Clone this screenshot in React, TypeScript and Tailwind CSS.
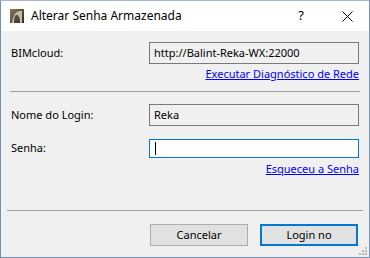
import React from "react";

const FONT = { fontFamily: '"Segoe UI", "Noto Sans", "Liberation Sans", sans-serif' };

const AppIcon = () => (
  <svg width="14" height="14" viewBox="0 0 14 14">
    <defs>
      <linearGradient id="ac" x1="0" y1="0" x2="1" y2="1">
        <stop offset="0" stopColor="#8a7a5c" />
        <stop offset="1" stopColor="#2e2a22" />
      </linearGradient>
    </defs>
    <rect width="14" height="14" fill="url(#ac)" />
    <path d="M2 14 C3 6 6 2 10 2 L12 2 L12 14 L10 14 C10 8 8 5 6 6 C4 7 4 10 4 14 Z" fill="#d8d0bc" opacity="0.85" />
  </svg>
);

const Row = ({ label, children }: { label: string; children: React.ReactNode }) => (
  <div className="flex items-center">
    <div className="w-[138px] text-[11px] text-black">{label}</div>
    <div className="flex-1">{children}</div>
  </div>
);

const App = () => {
  return (
    <div className="w-[370px] h-[258px] bg-[#f0f0f0] border border-[#7590b5] border-t-[#aab8cc] flex flex-col overflow-hidden" style={FONT}>
      {/* title bar */}
      <div className="h-[30px] bg-white flex items-center pl-[9px] shrink-0">
        <AppIcon />
        <span className="ml-[7px] text-[12px] text-black">Alterar Senha Armazenada</span>
        <span className="ml-auto w-[28px] text-center text-[13px] text-black">?</span>
        <svg className="ml-[27px] mr-[16px]" width="11" height="11" viewBox="0 0 11 11">
          <path d="M0.5 0.5 L10.5 10.5 M10.5 0.5 L0.5 10.5" stroke="#000" strokeWidth="1" />
        </svg>
      </div>

      {/* server */}
      <div className="px-[10px] pt-[11px]">
        <Row label="BIMcloud:">
          <div className="h-[22px] border border-[#7a7a7a] flex items-center pl-[4px] text-[11px] text-black">
            http://Balint-Reka-WX:22000
          </div>
        </Row>
        <div className="flex justify-end mt-[3px]">
          <a className="text-[11px] text-[#0000ff] underline leading-[14px]">Executar Diagnóstico de Rede</a>
        </div>
      </div>

      <div className="mx-[9px] mt-[10px] h-px bg-[#a0a0a0]" />

      {/* credentials */}
      <div className="px-[10px] pt-[12px]">
        <Row label="Nome do Login:">
          <div className="h-[22px] border border-[#7a7a7a] flex items-center pl-[4px] text-[11px] text-black">Reka</div>
        </Row>
        <div className="mt-[13px]">
          <Row label="Senha:">
            <div className="h-[19px] border border-[#0078d7] bg-white flex items-center pl-[5px]">
              <div className="w-px h-[13px] bg-black" />
            </div>
          </Row>
        </div>
        <div className="flex justify-end mt-[4px]">
          <a className="text-[11px] text-[#0000ff] underline leading-[14px]">Esqueceu a Senha</a>
        </div>
      </div>

      <div className="mx-[6px] mt-[34px] h-px bg-[#a0a0a0]" />

      {/* buttons */}
      <div className="flex justify-end gap-[12px] pr-[11px] mt-[13px]">
        <button className="w-[98px] h-[22px] bg-[#e1e1e1] border border-[#adadad] text-[11px] text-black">Cancelar</button>
        <button className="w-[98px] h-[22px] bg-[#e1e1e1] border-2 border-[#0078d7] text-[11px] text-black">Login no</button>
      </div>
      <div className="flex-1 relative">
        <svg className="absolute right-[2px] bottom-[2px]" width="8" height="8" viewBox="0 0 8 8">
          <g fill="#b8b8b8">
            <rect x="6" y="0" width="2" height="2" />
            <rect x="3" y="3" width="2" height="2" />
            <rect x="6" y="3" width="2" height="2" />
            <rect x="0" y="6" width="2" height="2" />
            <rect x="3" y="6" width="2" height="2" />
            <rect x="6" y="6" width="2" height="2" />
          </g>
        </svg>
      </div>
    </div>
  );
};

export default App;
